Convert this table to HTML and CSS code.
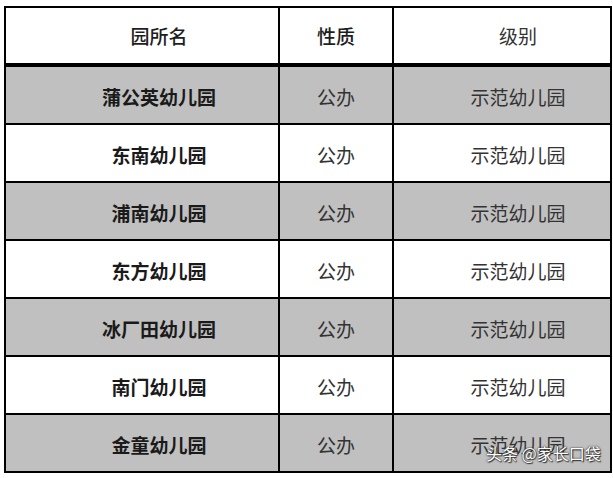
FILE: index.html
```html
<!DOCTYPE html>
<html lang="zh">
<head>
<meta charset="utf-8">
<link rel="stylesheet" href="styles.css">
</head>
<body>
<div class="page">
<table class="kg">
  <colgroup><col class="c1"><col class="c2"><col class="c3"></colgroup>
  <thead>
    <tr><th class="name">园所名</th><th class="type">性质</th><th class="level">级别</th></tr>
  </thead>
  <tbody>
    <tr class="gray"><td class="name">蒲公英幼儿园</td><td class="type">公办</td><td class="level">示范幼儿园</td></tr>
    <tr><td class="name">东南幼儿园</td><td class="type">公办</td><td class="level">示范幼儿园</td></tr>
    <tr class="gray"><td class="name">浦南幼儿园</td><td class="type">公办</td><td class="level">示范幼儿园</td></tr>
    <tr><td class="name">东方幼儿园</td><td class="type">公办</td><td class="level">示范幼儿园</td></tr>
    <tr class="gray"><td class="name">冰厂田幼儿园</td><td class="type">公办</td><td class="level">示范幼儿园</td></tr>
    <tr><td class="name">南门幼儿园</td><td class="type">公办</td><td class="level">示范幼儿园</td></tr>
    <tr class="gray"><td class="name">金童幼儿园</td><td class="type">公办</td><td class="level">示范幼儿园</td></tr>
  </tbody>
</table>
<div class="watermark">头条 @家长口袋</div>
</div>
</body>
</html>
```
FILE: styles.css
```css
html, body {
  margin: 0;
  padding: 0;
  background: #ffffff;
}
.page {
  position: relative;
  width: 613px;
  height: 478px;
  padding: 6px 0 0 4px;
  box-sizing: border-box;
  font-family: "Noto Sans CJK SC", "Noto Sans", sans-serif;
  color: #1e1e1e;
}
.kg {
  border-collapse: collapse;
  width: 606px;
  table-layout: fixed;
}
.c1 { width: 274px; }
.c2 { width: 114px; }
.c3 { width: 218px; }
.kg th, .kg td {
  border: 2px solid #000;
  padding: 0;
  font-size: 19px;
  text-align: center;
  vertical-align: middle;
  line-height: 1;
}
.kg th {
  height: 55px;
  font-weight: 500;
  border-bottom-width: 4px;
}
.kg th.level { font-weight: 400; color: #333; }
.kg td { height: 54px; font-weight: 400; color: #333; padding-top: 2px; }
.kg td.name { font-weight: 700; color: #1a1a1a; }
.kg .name { padding-left: 34px; }
.kg .level { padding-left: 32px; }
.gray td { background: #c0c0c0; }
.watermark {
  position: absolute;
  left: 486px;
  top: 441px;
  font-size: 16px;
  color: #ffffff;
  text-shadow: 0 0 2px #333, 0 0 1px #333, 1px 1px 1px #333;
}
```
